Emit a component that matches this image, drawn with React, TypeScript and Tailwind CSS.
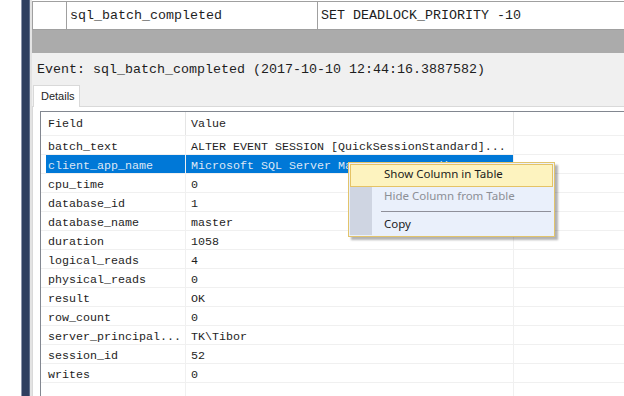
const mono = { fontFamily: '"Liberation Mono", "DejaVu Sans Mono", monospace' };

const rows: [string, string][] = [
  ["batch_text", "ALTER EVENT SESSION [QuickSessionStandard]..."],
  ["client_app_name", "Microsoft SQL Server Management Studio - Q..."],
  ["cpu_time", "0"],
  ["database_id", "1"],
  ["database_name", "master"],
  ["duration", "1058"],
  ["logical_reads", "4"],
  ["physical_reads", "0"],
  ["result", "OK"],
  ["row_count", "0"],
  ["server_principal...", "TK\\Tibor"],
  ["session_id", "52"],
  ["writes", "0"],
];

function ContextMenu() {
  return (
    <div className="absolute left-[348px] top-[162px] w-[207px] h-[75px] border border-[#e2c46c] bg-[#eaf0fb] p-px shadow-[3px_3px_2px_rgba(0,0,0,0.3)] font-['Noto_Sans',sans-serif] text-[11.5px] text-[#1b1b1b]">
      <div className="relative h-full">
        <div className="absolute left-0 top-0 bottom-0 w-[22px] bg-[#cfd5e2]" />
        <div className="relative h-[23px] border border-[#e5c365] bg-[#fdf3bf] flex items-center pl-[33px] pb-[3px]">
          Show Column in Table
        </div>
        <div className="relative h-[22px] flex items-center pl-[34px] pb-[4px] text-[#8c8f96]">
          Hide Column from Table
        </div>
        <div className="relative h-px ml-[31px] mr-[2px] mt-[2px] bg-[#8f909a]" />
        <div className="relative h-[24px] flex items-center pl-[34px] pb-px">Copy</div>
      </div>
    </div>
  );
}

export default function App() {
  return (
    <div className="relative w-[624px] h-[396px] overflow-hidden bg-white flex text-[#1e1e1e]">
      {/* left window edge */}
      <div className="w-[21px] bg-white" />
      <div className="w-px bg-[#8a95aa]" />
      <div className="w-[7px] bg-[#2e3f5f]" />
      <div className="w-px bg-[#5d6c88]" />
      <div className="w-[2px] bg-[#e3e3e3]" />

      <div className="flex-1 flex flex-col min-w-0 pt-px">
        {/* events grid last row */}
        <div className="h-[29px] shrink-0 flex border-y border-[#a0a0a0] bg-white text-[13.33px]" style={mono}>
          <div className="w-[35px] border-r border-l border-[#a0a0a0]" />
          <div className="w-[251px] border-r border-[#a0a0a0] pl-[3px] pt-px flex items-center">sql_batch_completed</div>
          <div className="flex-1 pl-[3px] pt-px flex items-center">SET DEADLOCK_PRIORITY -10</div>
        </div>
        <div className="h-[23px] shrink-0 bg-[#ababab]" />

        {/* details panel */}
        <div className="flex-1 flex flex-col bg-[#f0f0f0] min-h-0">
          <div className="h-[32px] shrink-0 flex items-center pl-[5px] pt-[2px] text-[13.33px]" style={mono}>
            Event: sql_batch_completed (2017-10-10 12:44:16.3887582)
          </div>
          <div className="flex shrink-0">
            <div className="relative z-10 ml-px w-[47px] h-[22px] -mb-px bg-white border-x border-t border-[#d9d9d9] pl-[7px] flex items-center font-['Liberation_Sans',sans-serif] text-[11px]">
              Details
            </div>
          </div>
          <div className="flex-1 flex flex-col bg-white border-t border-l border-[#d9d9d9] pl-[7px] pt-[4px] min-h-0">
            <div className="flex-1 flex flex-col border-l border-t border-[#828790] text-[11.67px] min-h-0" style={mono}>
              <div className="h-[24px] shrink-0 flex border-b border-[#f0f0f0]">
                <div className="w-[145px] border-r border-[#e5e5e5] pl-[7px] pt-[3px] flex items-center">Field</div>
                <div className="w-[328px] border-r border-[#e5e5e5] pl-[5px] pt-[3px] flex items-center">Value</div>
                <div className="flex-1" />
              </div>
              {rows.map(([f, v], i) => {
                const sel = i === 1;
                return (
                  <div key={f} className="h-[19px] shrink-0 flex border-b border-[#f0f0f0]">
                    <div className="w-[145px] border-r border-[#f0f0f0] pl-[5px] flex">
                      <div className={sel ? "flex-1 bg-[#0078d7] text-[#dde7f5] pl-[2px] pt-[6px] flex items-center" : "flex-1 pl-[2px] pt-[6px] flex items-center"}>
                        {f}
                      </div>
                    </div>
                    <div
                      className={
                        sel
                          ? "w-[328px] border-r border-[#f0f0f0] bg-[#0078d7] text-[#dde7f5] pl-[5px] pt-[6px] flex items-center whitespace-nowrap"
                          : "w-[328px] border-r border-[#f0f0f0] pl-[5px] pt-[6px] flex items-center whitespace-nowrap"
                      }
                    >
                      {v}
                    </div>
                    <div className="flex-1" />
                  </div>
                );
              })}
              <div className="flex-1 flex">
                <div className="w-[145px] border-r border-[#f0f0f0]" />
                <div className="w-[328px] border-r border-[#f0f0f0]" />
                <div className="flex-1" />
              </div>
            </div>
          </div>
        </div>
      </div>

      <ContextMenu />
    </div>
  );
}
